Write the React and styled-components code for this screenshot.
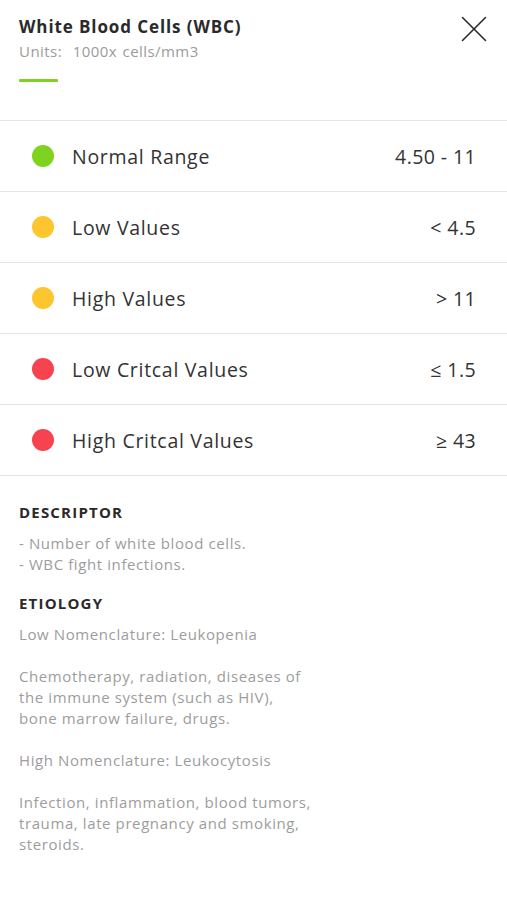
import React from 'react';
import styled, { createGlobalStyle } from 'styled-components';

const GlobalStyle = createGlobalStyle`
    html, body {
        margin: 0;
        padding: 0;
        background: #ffffff;
    }
    body {
        font-family: 'Open Sans', 'Lato', sans-serif;
        -webkit-font-smoothing: antialiased;
    }
`

const Page = styled.div`
    width: 507px;
    min-height: 900px;
    background: #ffffff;
`

const Header = styled.div`
    display: flex;
    justify-content: space-between;
    align-items: flex-start;
    padding: 16px 20px 0 19px;
    height: 104px;
    border-bottom: 1px solid #e4e4e4;
`

const TitleBlock = styled.div`
    display: flex;
    flex-direction: column;
`

const Title = styled.h1`
    margin: 0;
    font-size: 17px;
    line-height: 22px;
    font-weight: 700;
    color: #2a2a2a;
    letter-spacing: 0.9px;
`

const Units = styled.div`
    margin-top: 3px;
    font-size: 15px;
    line-height: 20px;
    color: #9b9b9b;
    letter-spacing: 0.45px;
    word-spacing: 1px;
`

const Accent = styled.div`
    width: 39px;
    height: 3px;
    margin-top: 18px;
    border-radius: 1px;
    background: #7ed321;
`

const CloseButton = styled.button`
    border: none;
    background: none;
    padding: 0;
    margin: 0;
    width: 26px;
    height: 26px;
    cursor: pointer;
    color: #2a2a2a;
`

const RangeList = styled.ul`
    list-style: none;
    margin: 0;
    padding: 0;
`

const RangeRow = styled.li`
    display: flex;
    align-items: center;
    height: 70px;
    padding: 0 31px 0 32px;
    border-bottom: 1px solid #e4e4e4;
`

const Dot = styled.span`
    width: 22px;
    height: 22px;
    border-radius: 50%;
    background: ${props => props.color};
    flex-shrink: 0;
`

const RangeLabel = styled.span`
    flex: 1;
    margin-left: 18px;
    font-size: 19.5px;
    color: #333333;
    letter-spacing: 0.7px;
`

const RangeValue = styled.span`
    font-size: 19.5px;
    color: #333333;
    letter-spacing: 0.4px;
`

const Details = styled.div`
    padding: 26px 19px 30px;
`

const SectionTitle = styled.h2`
    margin: 0 0 11px;
    font-size: 15px;
    line-height: 20px;
    font-weight: 700;
    color: #2a2a2a;
    text-transform: uppercase;
    letter-spacing: 1.2px;
`

const Paragraph = styled.p`
    margin: 0 0 21px;
    font-size: 15px;
    line-height: 21px;
    color: #9d9d9d;
    letter-spacing: 0.6px;
    white-space: pre-line;
`

const DescriptorText = styled(Paragraph)`
    margin-bottom: 18px;
`

const COLORS = {
    green: '#7ed321',
    yellow: '#fdc62e',
    red: '#f7434f'
}

const ranges = [
    { label: 'Normal Range', value: '4.50 - 11', color: COLORS.green },
    { label: 'Low Values', value: '< 4.5', color: COLORS.yellow },
    { label: 'High Values', value: '> 11', color: COLORS.yellow },
    { label: 'Low Critcal Values', value: '≤ 1.5', color: COLORS.red },
    { label: 'High Critcal Values', value: '≥ 43', color: COLORS.red }
]

const CloseIcon = () => (
    <svg width="26" height="26" viewBox="0 0 26 26" fill="none" stroke="currentColor" strokeWidth="1.6" strokeLinecap="round">
        <line x1="1.5" y1="1.5" x2="24.5" y2="24.5" />
        <line x1="24.5" y1="1.5" x2="1.5" y2="24.5" />
    </svg>
)

const App = () => (
    <Page>
        <GlobalStyle />
        <Header>
            <TitleBlock>
                <Title>White Blood Cells (WBC)</Title>
                <Units>Units:&nbsp; 1000x cells/mm3</Units>
                <Accent />
            </TitleBlock>
            <CloseButton aria-label="Close">
                <CloseIcon />
            </CloseButton>
        </Header>

        <RangeList>
            {ranges.map(r => (
                <RangeRow key={r.label}>
                    <Dot color={r.color} />
                    <RangeLabel>{r.label}</RangeLabel>
                    <RangeValue>{r.value}</RangeValue>
                </RangeRow>
            ))}
        </RangeList>

        <Details>
            <SectionTitle>Descriptor</SectionTitle>
            <DescriptorText>
                {'- Number of white blood cells.\n- WBC fight infections.'}
            </DescriptorText>

            <SectionTitle>Etiology</SectionTitle>
            <Paragraph>Low Nomenclature: Leukopenia</Paragraph>
            <Paragraph>
                {'Chemotherapy, radiation, diseases of\nthe immune system (such as HIV),\nbone marrow failure, drugs.'}
            </Paragraph>
            <Paragraph>High Nomenclature: Leukocytosis</Paragraph>
            <Paragraph>
                {'Infection, inflammation, blood tumors,\ntrauma, late pregnancy and smoking,\nsteroids.'}
            </Paragraph>
        </Details>
    </Page>
);

export default App;
